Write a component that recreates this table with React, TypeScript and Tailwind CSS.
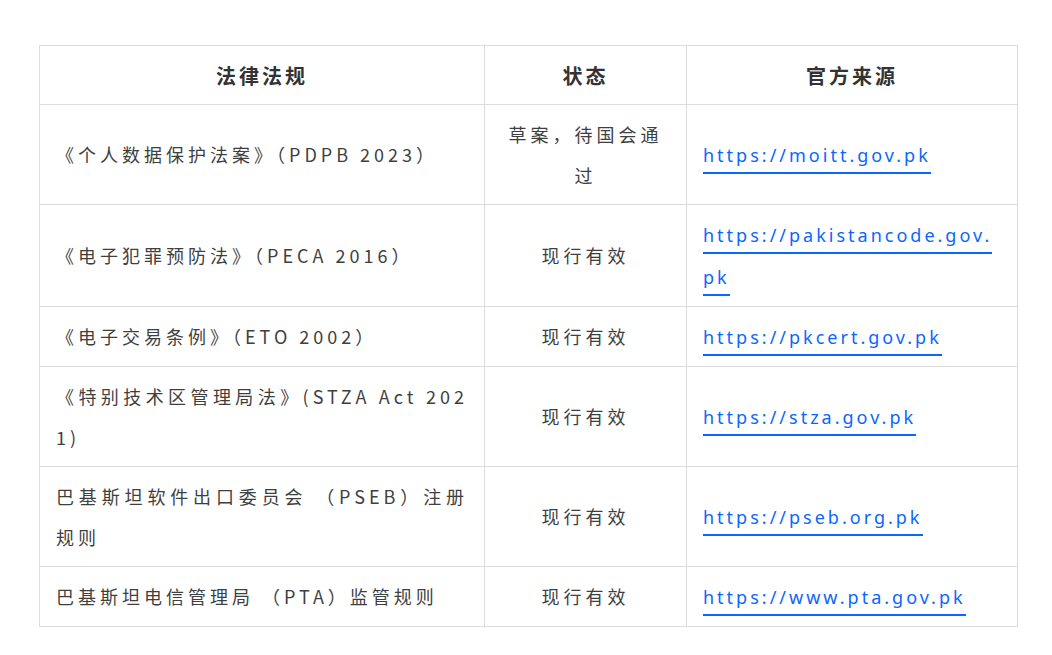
const rows = [
  { law: "《个人数据保护法案》（PDPB 2023）", status: "草案，待国会通过", url: "https://moitt.gov.pk" },
  { law: "《电子犯罪预防法》（PECA 2016）", status: "现行有效", url: "https://pakistancode.gov.pk" },
  { law: "《电子交易条例》（ETO 2002）", status: "现行有效", url: "https://pkcert.gov.pk" },
  { law: "《特别技术区管理局法》(STZA Act 2021)", status: "现行有效", url: "https://stza.gov.pk" },
  { law: "巴基斯坦软件出口委员会 （PSEB）注册规则", status: "现行有效", url: "https://pseb.org.pk" },
  { law: "巴基斯坦电信管理局 （PTA）监管规则", status: "现行有效", url: "https://www.pta.gov.pk" },
];

const cell = "border border-[#dcdcdc] px-4 py-[8.5px] align-middle break-all";

export default function App() {
  return (
    <div className="min-h-screen bg-white pt-[45px] pl-[39px] font-['Noto_Sans_CJK_SC',sans-serif] text-[18px] leading-[41px] tracking-[4px] text-[#3f3f3f]">
      <table className="w-[978px] table-fixed border-collapse">
        <colgroup>
          <col className="w-[445px]" />
          <col className="w-[202px]" />
          <col className="w-[331px]" />
        </colgroup>
        <thead>
          <tr>
            <th className={`${cell} text-center text-[20px] tracking-[3px] font-bold text-[#333]`}>法律法规</th>
            <th className={`${cell} text-center text-[20px] tracking-[3px] font-bold text-[#333]`}>状态</th>
            <th className={`${cell} text-center text-[20px] tracking-[3px] font-bold text-[#333]`}>官方来源</th>
          </tr>
        </thead>
        <tbody>
          {rows.map((r) => (
            <tr key={r.url}>
              <td className={`${cell} text-justify`}>{r.law}</td>
              <td className={`${cell} text-center`}>{r.status}</td>
              <td className={`${cell} text-left`}>
                <a
                  href={r.url}
                  className="font-['Noto_Sans',sans-serif] tracking-[3px] text-[#0b66ff] border-b-2 border-[#0b66ff] pb-[5px]"
                >
                  {r.url}
                </a>
              </td>
            </tr>
          ))}
        </tbody>
      </table>
    </div>
  );
}
